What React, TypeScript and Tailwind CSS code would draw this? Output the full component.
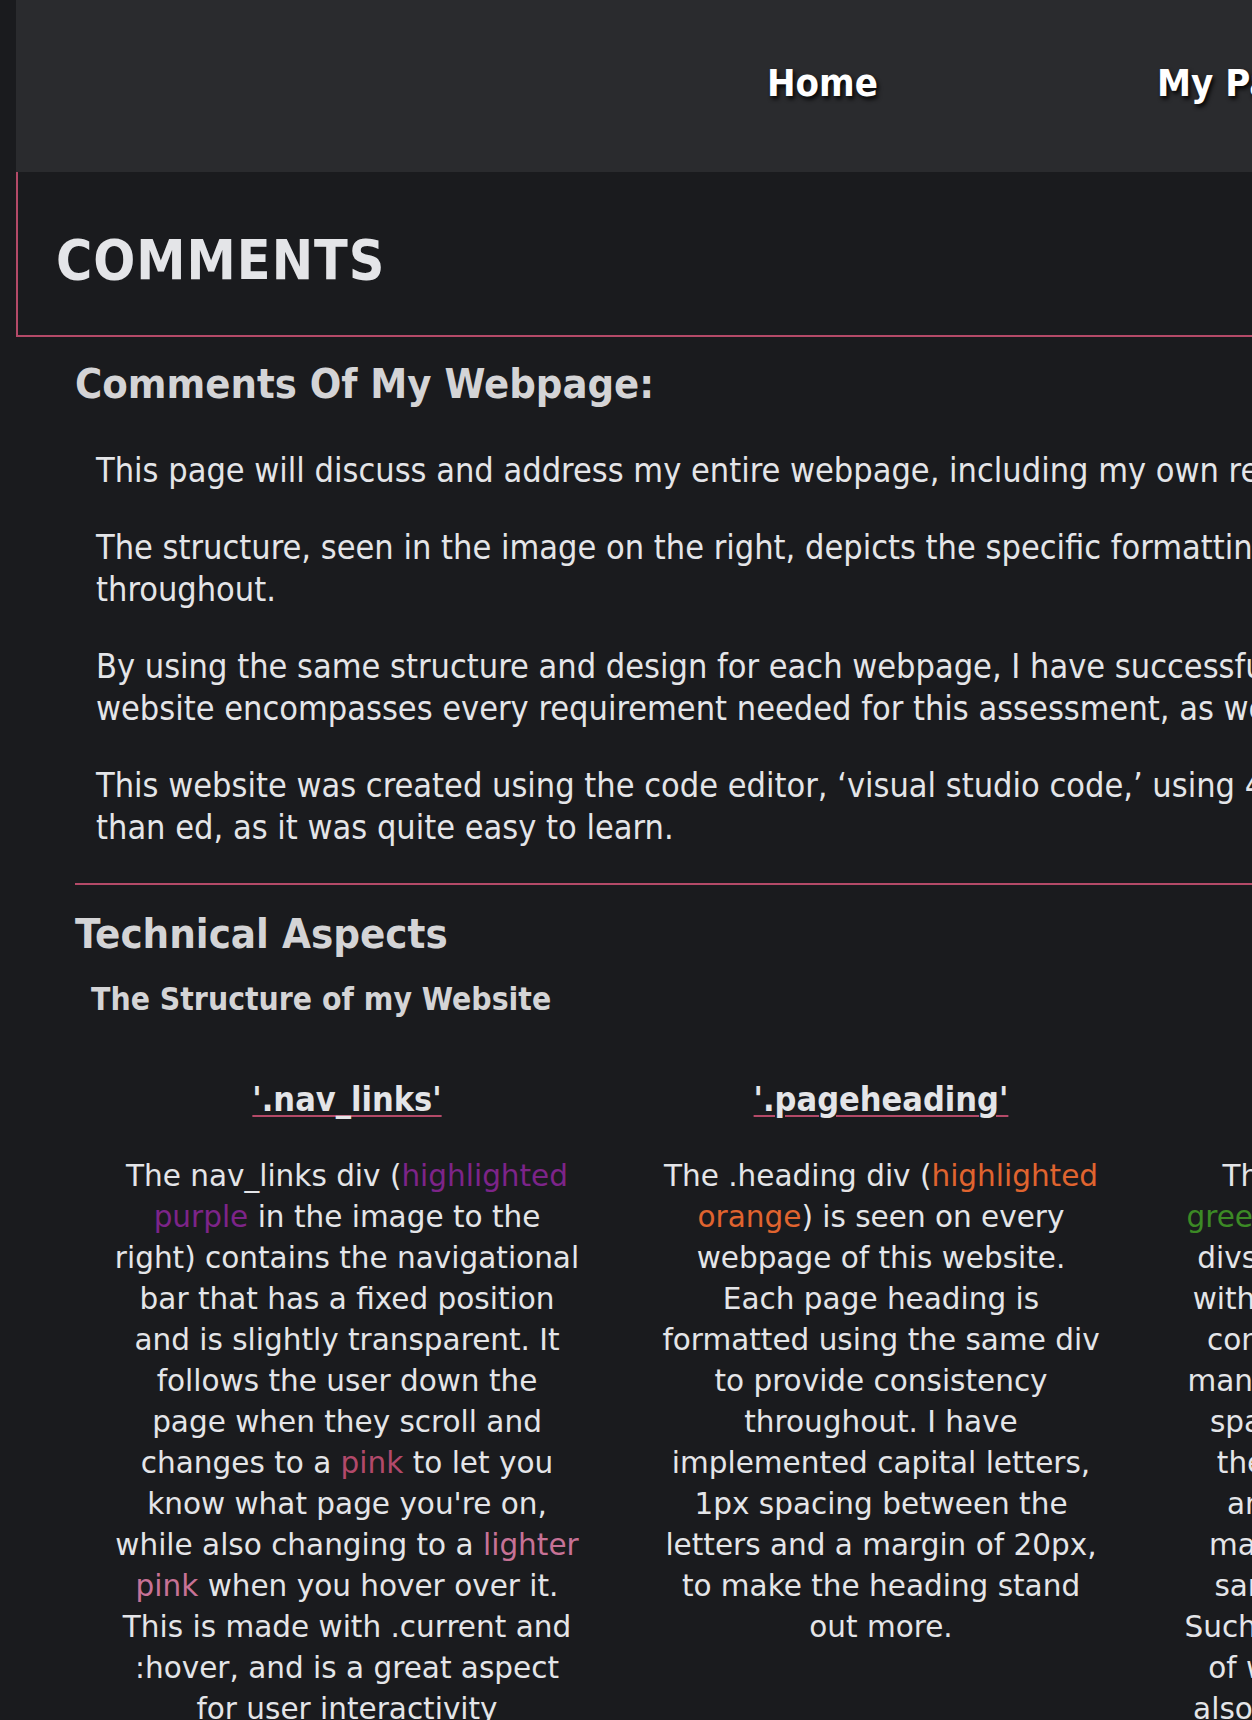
import { Fragment } from "react";

const tahoma = "font-['DejaVu_Sans_Condensed','DejaVu_Sans',sans-serif]";
const verdana = "font-['DejaVu_Sans','Verdana',sans-serif]";

const navLinks = ["Home", "My Passions", "My Goals", "Comments"];

const paragraphs = [
  [
    "This page will discuss and address my entire webpage, including my own reflection on the structure, design and content of each page.",
  ],
  [
    "The structure, seen in the image on the right, depicts the specific formatting of each of the divs that I have used consistently",
    "throughout.",
  ],
  [
    "By using the same structure and design for each webpage, I have successfully created a consistent and professional looking website. This",
    "website encompasses every requirement needed for this assessment, as well as some extra features.",
  ],
  [
    "This website was created using the code editor, \u2018visual studio code,\u2019 using 4 different files. I found this editor much more helpful",
    "than ed, as it was quite easy to learn.",
  ],
];

const purple = "text-[#7d2489]";
const pink = "text-[#b2496a]";
const lightPink = "text-[#c77296]";
const orange = "text-[#e0642f]";
const green = "text-[#3c8a25]";

type Seg = string | [string, string];

const columns: { title: string; lines: Seg[][] }[] = [
  {
    title: "'.nav_links'",
    lines: [
      ["The nav_links div (", ["highlighted", purple]],
      [["purple", purple], " in the image to the"],
      ["right) contains the navigational"],
      ["bar that has a fixed position"],
      ["and is slightly transparent. It"],
      ["follows the user down the"],
      ["page when they scroll and"],
      ["changes to a ", ["pink", pink], " to let you"],
      ["know what page you're on,"],
      ["while also changing to a ", ["lighter", lightPink]],
      [["pink", lightPink], " when you hover over it."],
      ["This is made with .current and"],
      [":hover, and is a great aspect"],
      ["for user interactivity"],
      ["and navigation."],
    ],
  },
  {
    title: "'.pageheading'",
    lines: [
      ["The .heading div (", ["highlighted", orange]],
      [["orange", orange], ") is seen on every"],
      ["webpage of this website."],
      ["Each page heading is"],
      ["formatted using the same div"],
      ["to provide consistency"],
      ["throughout. I have"],
      ["implemented capital letters,"],
      ["1px spacing between the"],
      ["letters and a margin of 20px,"],
      ["to make the heading stand"],
      ["out more."],
    ],
  },
  {
    title: "'.text_box'",
    lines: [
      ["The .text_box divs (darker"],
      [["green", green], ") are used for all of these"],
      ["divs that hold the main texts,"],
      ["with a consistent style across,"],
      ["content on every page, as it"],
      ["manages the margin, padding,"],
      ["spacing and its font size, so"],
      ["the layout of every page is"],
      ["an easy read, and always"],
      ["maintains the looks and the"],
      ["same styling as the others."],
      ["Such consistency is the marker"],
      ["of well built websites, and it"],
      ["also makes the site simpler to"],
      ["maintain."],
    ],
  },
];

export default function App() {
  return (
    <div className={`h-[1720px] w-full overflow-hidden bg-[#1a1b1e] ${tahoma}`}>
      <div className="w-[2600px] pl-4">
        <nav className="flex h-[172px] items-center bg-[#2a2b2e] pb-[6px] pl-[751px]">
          {navLinks.map((link) => (
            <a
              key={link}
              className="w-[390px] shrink-0 text-[38px] font-bold text-white [text-shadow:2px_3px_4px_rgba(0,0,0,0.9)]"
            >
              {link}
            </a>
          ))}
        </nav>

        <div className="h-[165px] border-b-2 border-l-2 border-[#b44a68] pl-[38px] pt-[61px]">
          <h1 className="text-[55px] font-bold leading-none tracking-[1px] text-[#e4e5e8]">
            COMMENTS
          </h1>
        </div>

        <div className="pl-[59px]">
          <h2 className="mt-[23px] text-[41.3px] font-bold leading-[48px] text-[#d4d4d6]">
            Comments Of My Webpage:
          </h2>
          <div className="ml-[21px] mt-[41px] flex flex-col gap-[35px]">
            {paragraphs.map((lines) => (
              <p
                key={lines[0]}
                className="whitespace-nowrap text-[34px] leading-[42px] text-[#e4e5e8]"
              >
                {lines.map((line, i) => (
                  <Fragment key={line}>
                    {i > 0 && <br />}
                    {line}
                  </Fragment>
                ))}
              </p>
            ))}
          </div>

          <hr className="mt-[35px] border-t-2 border-[#b44a68]" />

          <h2 className="mt-[25px] text-[41.6px] font-bold leading-[48px] text-[#d4d4d6]">
            Technical Aspects
          </h2>
          <h3 className="ml-4 mt-[22px] text-[31.6px] font-bold leading-[38px] text-[#d4d4d6]">
            The Structure of my Website
          </h3>

          <div className="ml-[37px] mt-[61px] flex gap-[64px]">
            {columns.map((col) => (
              <div key={col.title} className="w-[470px] shrink-0 text-center">
                <h4 className="text-[34px] font-bold leading-[40px] text-[#e4e5e8] underline decoration-[#b44a68] decoration-2 underline-offset-4">
                  {col.title}
                </h4>
                <p
                  className={`mt-[37px] whitespace-nowrap text-[29.5px] leading-[41px] text-[#e4e5e8] ${verdana}`}
                >
                  {col.lines.map((line, i) => (
                    <Fragment key={i}>
                      {i > 0 && <br />}
                      {line.map((seg, j) =>
                        typeof seg === "string" ? (
                          <Fragment key={j}>{seg}</Fragment>
                        ) : (
                          <span key={j} className={seg[1]}>
                            {seg[0]}
                          </span>
                        ),
                      )}
                    </Fragment>
                  ))}
                </p>
              </div>
            ))}
          </div>
        </div>
      </div>
    </div>
  );
}
